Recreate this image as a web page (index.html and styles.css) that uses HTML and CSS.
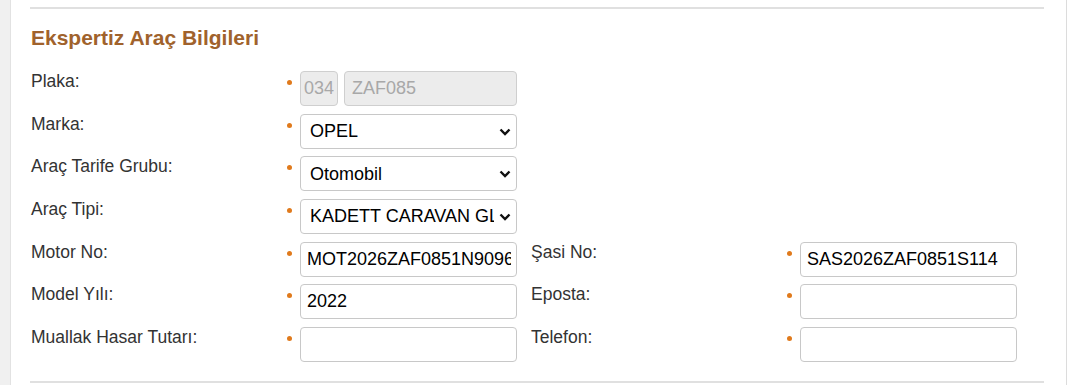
FILE: index.html
```html
<!DOCTYPE html>
<html lang="tr">
<head>
  <meta charset="UTF-8" />
  <title>Ekspertiz Araç Bilgileri</title>
  <link rel="stylesheet" href="styles.css">
</head>
<body>
  <div class="rail"></div>
  <div class="panel">
    <div class="section">
      <h3 class="section-title">Ekspertiz Araç Bilgileri</h3>

      <div class="form-grid">
        <div class="form-row">
          <div class="field">
            <label>Plaka:</label>
            <span class="req"></span>
            <div class="plate">
              <input class="plate-city" type="text" value="034" disabled />
              <input class="plate-no" type="text" value="ZAF085" disabled />
            </div>
          </div>
        </div>

        <div class="form-row">
          <div class="field">
            <label>Marka:</label>
            <span class="req"></span>
            <div class="select-wrap">
              <select><option>OPEL</option></select>
              <svg class="chevron" width="12" height="8" viewBox="0 0 12 8"><path d="M1.5 1.5 L6 6 L10.5 1.5" fill="none" stroke="#111" stroke-width="2.4" /></svg>
            </div>
          </div>
        </div>

        <div class="form-row">
          <div class="field">
            <label>Araç Tarife Grubu:</label>
            <span class="req"></span>
            <div class="select-wrap">
              <select><option>Otomobil</option></select>
              <svg class="chevron" width="12" height="8" viewBox="0 0 12 8"><path d="M1.5 1.5 L6 6 L10.5 1.5" fill="none" stroke="#111" stroke-width="2.4" /></svg>
            </div>
          </div>
        </div>

        <div class="form-row">
          <div class="field">
            <label>Araç Tipi:</label>
            <span class="req"></span>
            <div class="select-wrap">
              <select><option>KADETT CARAVAN GLS 1.6</option></select>
              <svg class="chevron" width="12" height="8" viewBox="0 0 12 8"><path d="M1.5 1.5 L6 6 L10.5 1.5" fill="none" stroke="#111" stroke-width="2.4" /></svg>
            </div>
          </div>
        </div>

        <div class="form-row">
          <div class="field">
            <label>Motor No:</label>
            <span class="req"></span>
            <input type="text" value="MOT2026ZAF0851N90961" />
          </div>
          <div class="field">
            <label>Şasi No:</label>
            <span class="req"></span>
            <input type="text" value="SAS2026ZAF0851S114" />
          </div>
        </div>

        <div class="form-row">
          <div class="field">
            <label>Model Yılı:</label>
            <span class="req"></span>
            <input type="text" value="2022" />
          </div>
          <div class="field">
            <label>Eposta:</label>
            <span class="req"></span>
            <input type="text" value="" />
          </div>
        </div>

        <div class="form-row">
          <div class="field">
            <label>Muallak Hasar Tutarı:</label>
            <span class="req"></span>
            <input type="text" value="" />
          </div>
          <div class="field">
            <label>Telefon:</label>
            <span class="req"></span>
            <input type="text" value="" />
          </div>
        </div>
      </div>
    </div>
  </div>
</body>
</html>
```

FILE: styles.css
```css
body {
  font-family: "Liberation Sans", Arial, sans-serif;
  background-color: #fff;
  margin: 0;
  padding: 0;
  display: flex;
  height: 385px;
  overflow: hidden;
}

.rail {
  width: 10px;
  flex-shrink: 0;
  background-color: #f0f0f0;
}

.panel {
  width: 1057px;
  border-left: 1px solid #e2e2e2;
  border-right: 1px solid #dcdcdc;
  padding: 7px 22px 0 19px;
  box-sizing: border-box;
}

.section {
  border-top: 2px solid #e0e0e0;
  border-bottom: 2px solid #e0e0e0;
  padding: 17px 0 19px 1px;
}

.section-title {
  margin: 0 0 21px;
  font-size: 21px;
  line-height: 24px;
  font-weight: bold;
  color: #a0622c;
}

.form-grid {
  display: flex;
  flex-direction: column;
  gap: 7.67px;
}

.form-row {
  display: flex;
  gap: 14px;
  height: 35px;
}

.field {
  display: grid;
  grid-template-columns: 254px 15px 217px;
  align-items: start;
}

label {
  font-size: 17.5px;
  color: #333;
  line-height: 20px;
}

.req {
  width: 5px;
  height: 5px;
  margin: 9px 0 0 2px;
  border-radius: 50%;
  background-color: #e07a1c;
}

input[type="text"],
select {
  height: 35px;
  width: 217px;
  box-sizing: border-box;
  border: 1px solid #c8c8c8;
  border-radius: 4px;
  font-family: "Liberation Sans", Arial, sans-serif;
  font-size: 18px;
  color: #000;
  background-color: #fff;
  margin: 0;
}

input[type="text"] {
  padding: 0 5px 0 6px;
}

select {
  appearance: none;
  padding: 0 22px 0 9px;
}

.select-wrap {
  position: relative;
  width: 217px;
  height: 35px;
}

.chevron {
  position: absolute;
  right: 6px;
  top: 14px;
  pointer-events: none;
}

.plate {
  display: flex;
  gap: 6px;
}

.plate input[type="text"]:disabled {
  background-color: #ececec;
  color: #a8a8a8;
  border-color: #cfcfcf;
}

.plate .plate-city {
  width: 38px;
  padding: 0 3px;
}

.plate .plate-no {
  width: 173px;
  padding: 0 7px;
}
```
